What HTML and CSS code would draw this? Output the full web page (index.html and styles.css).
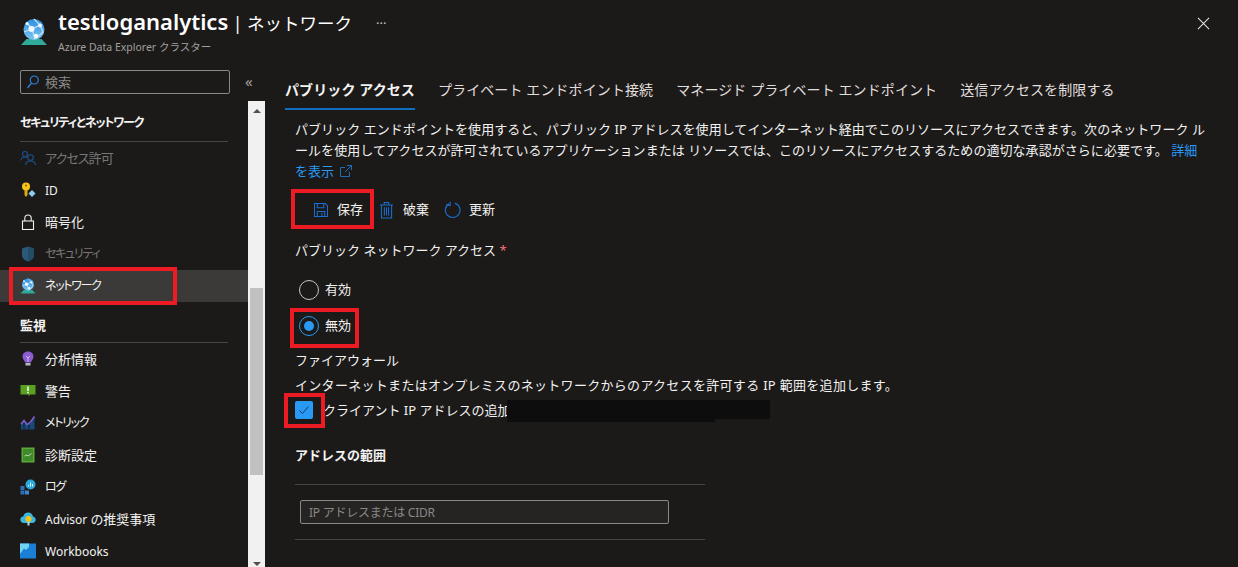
FILE: index.html
```html
<!DOCTYPE html>
<html lang="ja">
<head>
<meta charset="utf-8">
<title>testloganalytics | ネットワーク</title>
<link rel="stylesheet" href="styles.css">
</head>
<body>
<svg class="defs" width="0" height="0" aria-hidden="true">
  <defs>
    <linearGradient id="globe" x1="0" y1="0" x2="0" y2="1"><stop offset="0" stop-color="#2f8fe0"/><stop offset="1" stop-color="#7cc4ee"/></linearGradient>
    <symbol id="adx" viewBox="0 0 28 28">
      <path d="M1 27 L6.500 21 H21.500 L27 27 Z" fill="#2fa99a"/>
      <circle cx="14" cy="11.500" r="10.500" fill="url(#globe)"/>
      <path d="M14 1 L20 7 L12 11 L7 5 M12 11 L15 21 M12 11 L4 14 M20 7 L23 14 L15 21" stroke="#bfe3f8" stroke-width="1.200" fill="none"/>
      <circle cx="11.500" cy="11" r="3" fill="#eef8fe"/><circle cx="20" cy="7.500" r="2" fill="#eef8fe"/><circle cx="16" cy="18" r="2.200" fill="#eef8fe"/><circle cx="7" cy="5.500" r="1.500" fill="#eef8fe"/>
    </symbol>
  </defs>
</svg>
<header class="top">
  <svg class="logo"><use href="#adx"/></svg>
  <div class="titles">
    <h1 class="title"><span class="name">testloganalytics</span> | ネットワーク</h1>
    <p class="subtitle">Azure Data Explorer クラスター</p>
  </div>
  <span class="more">···</span>
  <svg class="close" viewBox="0 0 14 14"><path d="M1 1 L13 13 M13 1 L1 13" stroke="#e6e6e6" stroke-width="1.100"/></svg>
</header>
<div class="main">
  <div class="leftcol">
    <div class="searchrow">
      <div class="search">
        <svg class="searchicon" viewBox="0 0 12 14"><circle cx="7.300" cy="5" r="4" fill="none" stroke="#2f80cf" stroke-width="1.200"/><path d="M4.500 8 L.5 13" stroke="#2f80cf" stroke-width="1.300"/></svg>
        <span>検索</span>
      </div>
      <span class="collapse">«</span>
    </div>
    <div class="leftbody">
      <nav class="side">
        <div class="sechead first">セキュリティとネットワーク</div>
        <a class="item dim">
          <svg class="ic" viewBox="0 0 16 16" fill="none" stroke="#1f4f8a" stroke-width="1.100"><circle cx="5" cy="4" r="2.500"/><path d="M.8 10.500c.4-2.500 2-3.500 4.200-3.500 1 0 1.800.2 2.500.7"/><circle cx="10.500" cy="7.500" r="2.800"/><path d="M5.500 15c.3-2.800 2.300-4 5-4s4.700 1.200 5 4"/></svg>
          <span class="mixed">アクセス許可</span>
        </a>
        <a class="item">
          <svg class="ic" viewBox="0 0 16 16"><circle cx="6" cy="4.500" r="4" fill="#f5c518"/><circle cx="6" cy="3.500" r="1" fill="#7a5c00"/><path d="M4.500 8 H7.500 V13 L6 15 L4.500 13 Z" fill="#e0a810"/><path d="M12 8 L15.500 11.500 L12 15 L8.500 11.500 Z" fill="#8fcdf0"/></svg>
          <span class="latin">ID</span>
        </a>
        <a class="item">
          <svg class="ic" viewBox="0 0 16 16" fill="none" stroke="#f0f0f0" stroke-width="1.100"><rect x="2.500" y="7" width="11" height="8.500"/><path d="M4.800 7 V4.200 C4.800 2.200 6 1 8 1 S11.200 2.200 11.200 4.200 V7"/></svg>
          <span>暗号化</span>
        </a>
        <a class="item dim">
          <svg class="ic" viewBox="0 0 16 16"><path d="M8 .5 L14 2.500 V9 C14 12.500 11 14.500 8 15.500 C5 14.500 2 12.500 2 9 V2.500 Z" fill="#2b5a78"/><path d="M8 .5 L14 2.500 V9 C14 12.500 11 14.500 8 15.500 Z" fill="#234c66"/></svg>
          <span class="kana">セキュリティ</span>
        </a>
        <a class="item active">
          <svg class="ic" viewBox="0 0 28 28"><use href="#adx"/></svg>
          <span class="kana">ネットワーク</span>
          <i class="mark mark-net"></i>
        </a>
        <div class="sechead">監視</div>
        <a class="item">
          <svg class="ic" viewBox="0 0 16 16"><path d="M8 .5 C11.500 .5 13.500 3 13.500 5.500 C13.500 8 11.500 9.500 11 11.500 H5 C4.500 9.500 2.500 8 2.500 5.500 C2.500 3 4.500 .5 8 .5 Z" fill="#8d5bd0"/><path d="M6 5 L8 7 L10 5 M8 7 V11" stroke="#e6d8f8" stroke-width=".8" fill="none"/><rect x="5.500" y="12" width="5" height="2.500" fill="#b9b9c4"/></svg>
          <span>分析情報</span>
        </a>
        <a class="item">
          <svg class="ic" viewBox="0 0 16 16"><path d="M.5 2 H15.500 V11.500 H10 L8.500 13.500 V11.500 H.5 Z" fill="#5aa021"/><rect x="7.200" y="3.500" width="1.600" height="4.500" fill="#f2f8ea"/><rect x="7.200" y="8.800" width="1.600" height="1.600" fill="#f2f8ea"/></svg>
          <span>警告</span>
        </a>
        <a class="item">
          <svg class="ic" viewBox="0 0 16 16"><path d="M1 14.500 V9 L4 6 L6.500 9.500 L10 8 L14.500 1.500 V14.500 Z" fill="#17487f"/><path d="M1 9 L4 5.500 L7 9.500 L10.500 7 L14.500 1.500" stroke="#8360c8" stroke-width="1.500" fill="none"/><path d="M4 8 V14.500 M9 10 V14.500" stroke="#1b1a19" stroke-width="1"/></svg>
          <span class="kana">メトリック</span>
        </a>
        <a class="item">
          <svg class="ic" viewBox="0 0 16 16"><rect x="1.500" y=".5" width="13" height="15" fill="#5ea83a"/><rect x="3" y="2" width="10" height="12" fill="#3f8a2c"/><path d="M4.500 9 L7 8 L8 9 L11.500 6.500" stroke="#c7e4b4" stroke-width=".9" fill="none"/></svg>
          <span>診断設定</span>
        </a>
        <a class="item">
          <svg class="ic" viewBox="0 0 16 16"><circle cx="10.500" cy="5.500" r="5" fill="#29a8dc"/><path d="M8.500 7.500 V6 M10.500 7.500 V3.500 M12.500 7.500 V5" stroke="#e6f6fd" stroke-width="1"/><rect x=".5" y="7" width="4" height="4" fill="#2f6fb5"/><rect x=".5" y="11.500" width="4" height="4" fill="#2f6fb5"/><rect x="5" y="11.500" width="4" height="4" fill="#3b83cc"/></svg>
          <span class="kana">ログ</span>
        </a>
        <a class="item">
          <svg class="ic" viewBox="0 0 16 16"><path d="M4 12 C1.500 12 .3 10.300 .3 8.500 C.3 6.700 1.700 5.500 3.200 5.500 C3.800 3 5.700 1.500 8.200 1.500 C10.800 1.500 12.700 3.200 13 5.500 C14.600 5.800 15.700 7 15.700 8.700 C15.700 10.500 14.400 12 12.300 12 Z" fill="#3bb8dc"/><circle cx="8.500" cy="8" r="3" fill="#f4c21b"/><rect x="7.500" y="11" width="2" height="3.500" fill="#bcd8e8"/></svg>
          <span><span class="latin">Advisor</span> の推奨事項</span>
        </a>
        <a class="item">
          <svg class="ic" viewBox="0 0 16 16"><rect y=".5" width="16" height="15" fill="#1b7fd6"/><path d="M0 .5 H16 L9 .5 L9 4 L6 7 L4 5.500 L0 11 Z" fill="#6fd3f5"/></svg>
          <span class="latin">Workbooks</span>
        </a>
      </nav>
      <div class="scrollbar">
        <div class="arrow up"></div>
        <div class="thumb"></div>
        <div class="arrow down"></div>
      </div>
    </div>
  </div>
  <main class="content">
    <div class="tabs">
      <a class="tab current">パブリック アクセス</a>
      <a class="tab">プライベート エンドポイント接続</a>
      <a class="tab">マネージド プライベート エンドポイント</a>
      <a class="tab">送信アクセスを制限する</a>
    </div>
    <div class="pane">
      <p class="desc">パブリック エンドポイントを使用すると、パブリック IP アドレスを使用してインターネット経由でこのリソースにアクセスできます。次のネットワーク ル<br>ールを使用してアクセスが許可されているアプリケーションまたは リソースでは、このリソースにアクセスするための適切な承認がさらに必要です。 <a class="link">詳細</a><br><a class="link">を表示 <svg class="ext" viewBox="0 0 12 12" fill="none" stroke="#1f6fb8" stroke-width="1"><path d="M9.500 7 V11.500 H.5 V2.500 H5 M7 .5 H11.500 V5 M11.500 .5 L5 7"/></svg></a></p>
      <div class="cmdbar">
        <a class="cmd save">
          <svg class="cmdicon" viewBox="0 0 15 15" fill="none" stroke="#1a6fd0" stroke-width="1.100"><path d="M.5 .5 H12 L14.500 3 V14.500 H.5 Z"/><path d="M3.500 .5 V5 H10.500 V.5 M3.500 14.500 V9 H11.500 V14.500 M8.500 10.500 V14"/></svg>
          <span>保存</span>
          <i class="mark mark-save"></i>
        </a>
        <a class="cmd discard">
          <svg class="cmdicon" viewBox="0 0 14 18" fill="none" stroke="#1a6fd0" stroke-width="1.100"><path d="M0 3.500 H14 M4.500 3.500 V1 H9.500 V3.500 M1.500 3.500 V17.500 H12.500 V3.500 M4.700 6 V15 M7 6 V15 M9.300 6 V15"/></svg>
          <span>破棄</span>
        </a>
        <a class="cmd refresh">
          <svg class="cmdicon" viewBox="0 0 18 18" fill="none" stroke="#1a6fd0" stroke-width="1.200"><path d="M5.500 2.300 A7.800 7.800 0 1 0 11.500 1.700"/><path d="M6.500 .3 L6.500 4.300 L2.500 3.300"/></svg>
          <span>更新</span>
        </a>
      </div>
      <div class="fieldlabel">パブリック ネットワーク アクセス <span class="req">*</span></div>
      <div class="radios">
        <label class="radio"><i class="circle"></i><span>有効</span></label>
        <label class="radio on"><i class="circle"></i><span>無効</span><i class="mark mark-radio"></i></label>
      </div>
      <div class="fw">ファイアウォール</div>
      <div class="fwdesc">インターネットまたはオンプレミスのネットワークからのアクセスを許可する IP 範囲を追加します。</div>
      <div class="check">
        <i class="box"><svg viewBox="0 0 12 12" fill="none" stroke="#1b3a5c" stroke-width="1"><path d="M1.500 6.500 L4.500 9.500 L10.500 2.500"/></svg></i>
        <span>クライアント IP アドレスの追加</span>
        <i class="redact"></i>
        <i class="mark mark-check"></i>
      </div>
      <div class="rangehead">アドレスの範囲</div>
      <div class="rangebox">
        <div class="ipinput">IP アドレスまたは CIDR</div>
      </div>
    </div>
  </main>
</div>
</body>
</html>
```
FILE: styles.css
```css
* { box-sizing: border-box; }
html, body { margin: 0; height: 100%; }
body {
  background: #1b1a19;
  color: #f3f2f1;
  font-family: "Noto Sans", "Noto Sans CJK JP", sans-serif;
  font-size: 13px;
  overflow: hidden;
  height: 567px;
}
.defs { position: absolute; }
p, h1 { margin: 0; }
i { font-style: normal; display: block; }

.top { display: flex; height: 60px; padding: 8px 28px 0 20px; position: relative; }
.logo { width: 28px; height: 28px; margin: 10px 10px 0 0; flex: none; }
.titles { width: 318px; flex: none; }
.title { font-size: 17.500px; font-weight: 400; line-height: 27px; white-space: nowrap; color: #fff; }
.name { font-weight: 600; font-size: 22px; }
.subtitle { font-size: 10.500px; color: #a19f9d; line-height: 14px; margin-top: 3px; }
.more { color: #c8c6c4; font-size: 13px; line-height: 24px; width: 20px; margin-top: 3px; }
.close { width: 13px; height: 13px; margin: 9px 0 0 auto; }

.main { display: flex; height: 507px; }
.leftcol { width: 265px; flex: none; display: flex; flex-direction: column; }
.searchrow { display: flex; align-items: flex-start; padding: 10px 0 0 20px; height: 41px; flex: none; }
.search {
  width: 210px; height: 24px; border: 1px solid #8a8886; border-radius: 2px;
  display: flex; align-items: center; padding-left: 6px; gap: 6px; color: #8a8886;
}
.search span { margin-bottom: 2px; }
.searchicon { width: 12px; height: 14px; }
.collapse { color: #a19f9d; font-size: 15px; margin-left: 15px; line-height: 22px; }

.leftbody { display: flex; flex: 1; min-height: 0; }
.side { width: 248px; flex: none; overflow: hidden; font-feature-settings: "palt"; }
.sechead {
  margin: 0 20px; padding-top: 14px; height: 41px; font-weight: 700; font-size: 13px; line-height: 18px;
  border-bottom: 1px solid #484644; color: #f3f2f1;
}
.sechead.first { padding-top: 13px; font-size: 12px; letter-spacing: -1.200px; }
.item { display: flex; align-items: center; height: 32px; padding-left: 20px; position: relative; font-size: 13px; }
.item > span:not(.latin) { margin-bottom: 2px; }
.latin { font-size: 12px; }
.kana { font-size: 12px; letter-spacing: -1.300px; }
.mixed { letter-spacing: -.9px; }
.item.dim { color: #797775; }
.item.active { background: #3b3a39; }
.ic { width: 16px; height: 16px; margin-right: 9px; flex: none; }

.scrollbar { width: 17px; background: #f1f1f1; display: flex; flex-direction: column; align-items: center; }
.arrow { width: 0; height: 0; border-left: 4px solid transparent; border-right: 4px solid transparent; flex: none; }
.arrow.up { border-bottom: 4px solid #505050; margin: 8px 0 175px; }
.arrow.down { border-top: 4px solid #505050; margin-top: 87px; }
.thumb { width: 13px; height: 187px; background: #c1c1c1; flex: none; }

.content { flex: 1; min-width: 0; padding: 0 0 0 20px; }
.tabs { display: flex; gap: 23px; height: 50px; font-size: 14px; padding-top: 20px; color: #e1dfdd; letter-spacing: .1px; }
.tab { height: 30px; line-height: 20px; white-space: nowrap; }
.tab.current { font-weight: 700; color: #f3f2f1; border-bottom: 2px solid #106ebe; }
.pane { padding: 0 0 0 10px; }
.desc { line-height: 21px; margin-top: 9px; white-space: nowrap; height: 72px; letter-spacing: .05px; }
.link { color: #2899f5; }
.ext { width: 12px; height: 12px; vertical-align: -1px; margin-left: 2px; }

.cmdbar { display: flex; height: 36px; margin-top: 1px; align-items: center; font-size: 13px; line-height: 18px; }
.cmd { display: flex; align-items: center; position: relative; }
.cmd span { margin-bottom: 2px; }
.cmdicon { flex: none; }
.save { margin-left: 19px; gap: 9px; }
.save .cmdicon { width: 14px; height: 14px; }
.discard { margin-left: 17px; gap: 10px; }
.discard .cmdicon { width: 13px; height: 18px; }
.refresh { margin-left: 15px; gap: 8px; }
.refresh .cmdicon { width: 17px; height: 18px; }
.fieldlabel { margin-top: 13px; height: 20px; line-height: 18px; }
.req { color: #f1707b; }

.radios { margin-top: 11px; }
.radio { display: flex; align-items: center; height: 36px; gap: 6px; padding-left: 4px; position: relative; }
.radio span { margin-bottom: 3px; }
.circle { width: 20px; height: 20px; border-radius: 50%; border: 1px solid #c8c6c4; position: relative; flex: none; }
.radio.on .circle { border-color: #2899f5; display: flex; align-items: center; justify-content: center; }
.radio.on .circle::after { content: ""; width: 10px; height: 10px; border-radius: 50%; background: #2899f5; }
.fw { line-height: 20px; margin-top: 6px; }
.fwdesc { line-height: 20px; margin-top: 5px; white-space: nowrap; letter-spacing: .3px; }
.check { display: flex; align-items: center; height: 20px; margin-top: 5px; position: relative; }
.check span { margin-bottom: 2px; }
.box { width: 18px; height: 18px; background: #2899f5; border-radius: 2px; display: flex; align-items: center; justify-content: center; margin-right: 10px; flex: none; }
.box svg { width: 12px; height: 12px; }
.redact { position: absolute; left: 212px; top: 0; width: 263px; height: 19px; background: #0d0d0d; }
.redact::after { content: ""; position: absolute; left: 0; top: 19px; width: 208px; height: 3px; background: #0d0d0d; }
.rangehead { font-weight: 700; margin-top: 25px; line-height: 20px; }
.rangebox { width: 410px; height: 56px; margin-top: 19px; border-top: 1px solid #484644; border-bottom: 1px solid #484644; padding: 15px 0 0 5px; }
.ipinput { width: 369px; height: 24px; background: #252423; border: 1px solid #8a8886; border-radius: 2px; line-height: 23px; padding-left: 8px; color: #8a8886; font-size: 12px; letter-spacing: -.25px; }

.mark { position: absolute; border: 4px solid #ed1c24; pointer-events: none; }
.mark-net { left: 9px; top: -3px; width: 168px; height: 38px; }
.mark-save { left: -23px; top: -11px; width: 83px; height: 40px; }
.mark-radio { left: -5px; top: 0; width: 69px; height: 40px; }
.mark-check { left: -11px; top: -7px; width: 41px; height: 35px; }
```
